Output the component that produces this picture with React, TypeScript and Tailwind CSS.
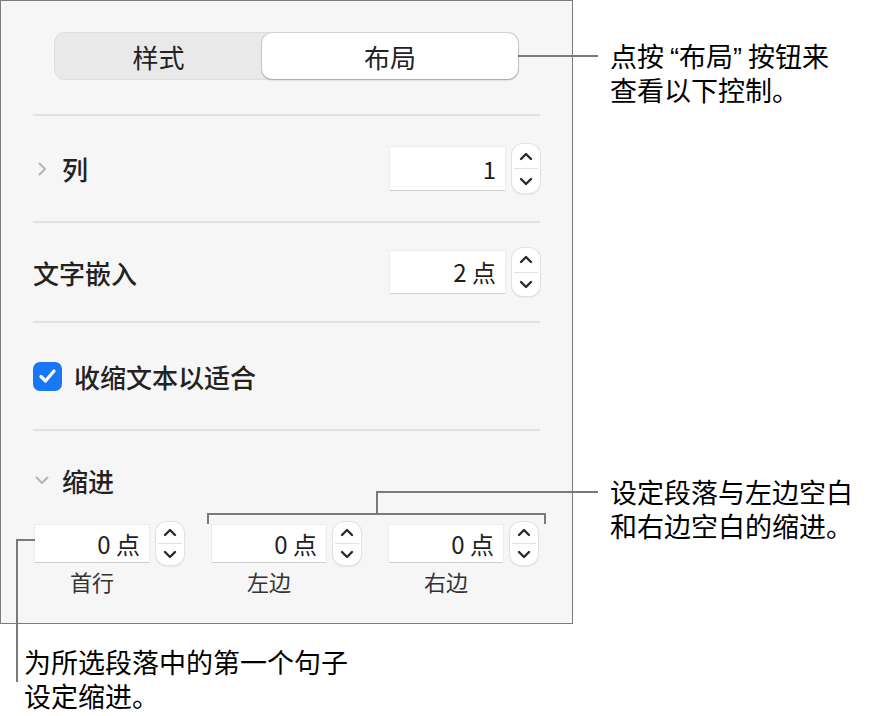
import React from 'react';

const cjk = { fontFamily: '"Noto Sans CJK SC", "Liberation Sans", sans-serif' };
const latin = { fontFamily: '"Liberation Sans", sans-serif' };

function Chevron({ down }: { down?: boolean }) {
  return (
    <svg width="16" height="16" viewBox="0 0 16 16" className="shrink-0">
      <path
        d={down ? 'M2.5 5.5 L8 11 L13.5 5.5' : 'M5.5 2.5 L11 8 L5.5 13.5'}
        fill="none"
        stroke="#b5b5b5"
        strokeWidth="2"
        strokeLinecap="round"
        strokeLinejoin="round"
      />
    </svg>
  );
}

function Stepper({ h }: { h: number }) {
  return (
    <div
      className="w-[28px] flex flex-col bg-white rounded-[11px] shadow-[0_0_0_1px_#e2e2e2,0_1px_2px_rgba(0,0,0,0.18)]"
      style={{ height: h }}
    >
      <div className="flex-1 flex items-center justify-center">
        <svg width="14" height="9" viewBox="0 0 14 9">
          <path d="M2 7 L7 2 L12 7" fill="none" stroke="#2b2b2b" strokeWidth="2.4" strokeLinecap="round" strokeLinejoin="round" />
        </svg>
      </div>
      <div className="h-px bg-[#e2e2e2] mx-[2px]" />
      <div className="flex-1 flex items-center justify-center">
        <svg width="14" height="9" viewBox="0 0 14 9">
          <path d="M2 2 L7 7 L12 2" fill="none" stroke="#2b2b2b" strokeWidth="2.4" strokeLinecap="round" strokeLinejoin="round" />
        </svg>
      </div>
    </div>
  );
}

function Field({ value, w, h }: { value: string; w: number; h: number }) {
  return (
    <div className="flex items-center gap-[7px]">
      <div
        className="bg-white flex items-center justify-end pr-[9px] text-[24px] text-[#1e1e1e] shadow-[0_1px_0_#cfcfcf,0_0_0_1px_#ececec]"
        style={{ width: w, height: h, ...cjk }}
      >
        {value}
      </div>
      <Stepper h={h + 6} />
    </div>
  );
}

const Sep = () => <div className="h-[2px] bg-[#e1e1e1]" />;

// one annotation line; fixed box so lines sit 34px apart
const Line = ({ children }: { children: React.ReactNode }) => (
  <span className="block h-[34px] leading-[34px] whitespace-nowrap">{children}</span>
);

export default function App() {
  return (
    <div className="relative w-[870px] h-[716px] bg-white overflow-hidden" style={cjk}>
      {/* panel */}
      <div className="w-[573px] h-[624px] bg-[#f6f6f6] border border-[#7c7c7c] flex flex-col px-[32px] pt-[32px]">
        <div className="mx-[22px] h-[46px] flex bg-[#e9e9e9] rounded-[10px] shadow-[0_0_0_1px_#dedede] text-[26px] text-[#222]">
          <div className="w-[207px] flex items-center justify-center">样式</div>
          <div className="flex-1 flex items-center justify-center bg-white rounded-[10px] shadow-[0_1px_2px_rgba(0,0,0,0.25),0_0_0_1px_#d6d6d6]">
            布局
          </div>
        </div>

        <div className="mt-[35px]"><Sep /></div>

        <div className="h-[105px] flex items-center">
          <div className="flex items-center gap-[12px] pl-[1px] text-[26px] font-medium text-[#222]">
            <Chevron />
            <span>列</span>
          </div>
          <div className="ml-auto">
            <Field value="1" w={115} h={43} />
          </div>
        </div>
        <Sep />

        <div className="h-[98px] flex items-center">
          <span className="text-[26px] font-medium text-[#222]">文字嵌入</span>
          <div className="ml-auto">
            <Field value="2 点" w={115} h={42} />
          </div>
        </div>
        <Sep />

        <div className="h-[106px] flex items-center gap-[12px]">
          <div className="w-[29px] h-[29px] rounded-[7px] bg-[#1777f4] flex items-center justify-center">
            <svg width="19" height="16" viewBox="0 0 19 16">
              <path d="M3 8.5 L7.5 13 L16 3" fill="none" stroke="white" strokeWidth="3.2" strokeLinecap="round" strokeLinejoin="round" />
            </svg>
          </div>
          <span className="text-[26px] font-medium text-[#222]">收缩文本以适合</span>
        </div>
        <Sep />

        <div className="mt-[29px] h-[40px] flex items-center gap-[12px] pl-[1px] text-[26px] font-medium text-[#222]">
          <Chevron down />
          <span>缩进</span>
        </div>

        <div className="mt-[22px] flex pl-[2px] gap-[28px]">
          {[
            ['0 点', '首行'],
            ['0 点', '左边'],
            ['0 点', '右边'],
          ].map(([v, l], i) => (
            <div key={i} className="flex flex-col">
              <Field value={v} w={114} h={37} />
              <div className="w-[114px] mt-[1px] text-center text-[22px] leading-[30px] text-[#333]">{l}</div>
            </div>
          ))}
        </div>
      </div>

      {/* bottom callout text */}
      <div className="absolute left-[24px] top-[645px] text-[27px] text-black">
        <Line>为所选段落中的第一个句子</Line>
        <Line>设定缩进。</Line>
      </div>

      {/* right callouts */}
      <div className="absolute left-[610px] top-[39px] text-[27px] text-black">
        <Line>
          点按<span className="ml-[6px]" style={latin}>“</span>布局<span className="mr-[6px]" style={latin}>”</span>按钮来
        </Line>
        <Line>查看以下控制。</Line>
      </div>
      <div className="absolute left-[610px] top-[475px] text-[27px] text-black">
        <Line>设定段落与左边空白</Line>
        <Line>和右边空白的缩进。</Line>
      </div>

      {/* callout lines */}
      <div className="absolute left-[518px] top-[55px] w-[80px] h-[2px] bg-[#7a7a7a]" />
      <div className="absolute left-[376px] top-[491px] w-[222px] h-[2px] bg-[#7a7a7a]" />
      <div className="absolute left-[376px] top-[491px] w-[2px] h-[23px] bg-[#7a7a7a]" />
      <div className="absolute left-[207px] top-[513px] w-[339px] h-[2px] bg-[#7a7a7a]" />
      <div className="absolute left-[207px] top-[513px] w-[2px] h-[11px] bg-[#7a7a7a]" />
      <div className="absolute left-[544px] top-[513px] w-[2px] h-[11px] bg-[#7a7a7a]" />
      <div className="absolute left-[16px] top-[539px] w-[19px] h-[2px] bg-[#7a7a7a]" />
      <div className="absolute left-[16px] top-[539px] w-[2px] h-[143px] bg-[#7a7a7a]" />
    </div>
  );
}
